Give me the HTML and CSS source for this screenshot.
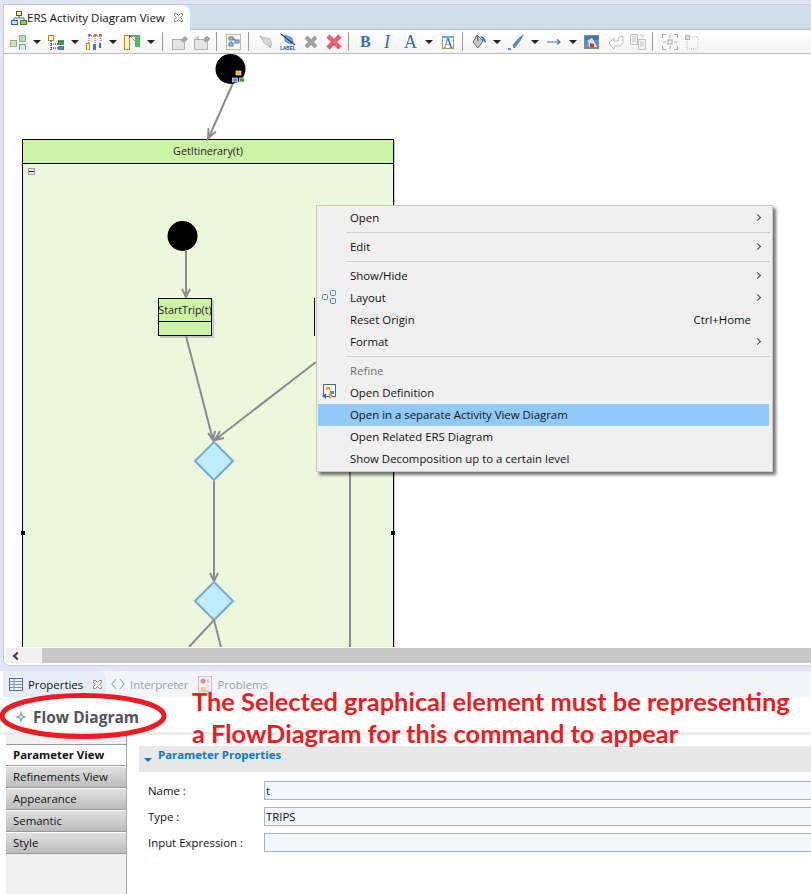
FILE: index.html
```html
<!DOCTYPE html>
<html lang="en">
<head>
    <meta charset="UTF-8">
    <title>ERS Activity Diagram View</title>
    <link rel="stylesheet" href="styles.css">
</head>
<body>
    <div class="editor">
        <div class="tabbar">
            <div class="tab">
                <svg class="tab-icon" viewBox="0 0 16 14" width="16" height="14">
                    <rect x="5.5" y="0.5" width="5" height="4" fill="#fde9a8" stroke="#6a5a20"/>
                    <path d="M8 5v2M3 9V7h10v2" fill="none" stroke="#4a6ea8"/>
                    <rect x="0.5" y="9.5" width="6" height="4" fill="#cfe2f8" stroke="#2f5f9f"/>
                    <rect x="9.5" y="9.5" width="6" height="4" fill="#8fcf5f" stroke="#3f7f2f"/>
                </svg>
                <span>ERS Activity Diagram View</span>
                <svg class="close" viewBox="0 0 11 11" width="11" height="11">
                    <path d="M1.5 1.5h2l2 2 2-2h2v2l-2 2 2 2v2h-2l-2-2-2 2h-2v-2l2-2-2-2z" fill="#fff" stroke="#8a8a8a"/>
                </svg>
            </div>
        </div>

        <div class="toolbar">
            <svg class="tool" viewBox="0 0 16 16"><rect x="0.5" y="6.5" width="6" height="6" fill="#cfe0a0" stroke="#9db08a"/><rect x="9.5" y="1.5" width="6" height="6" fill="#b5e0a5" stroke="#8ab09a"/><rect x="9.5" y="10.5" width="6" height="6" fill="#d5e5f8" stroke="#7a9cc8"/></svg>
            <span class="drop"></span>
            <svg class="tool" viewBox="0 0 16 16"><rect x="0.5" y="1.5" width="5" height="5" fill="#fff4cc" stroke="#b88a18"/><path d="M3 7v9M3 10h7M3 14h7" stroke="#111" stroke-dasharray="1 1" fill="none"/><rect x="10" y="6" width="6" height="5" fill="#3f9a50"/><rect x="10" y="12" width="6" height="5" fill="#4f80c0"/></svg>
            <span class="drop"></span>
            <svg class="tool" viewBox="0 0 16 16"><path d="M3 2v8M3 2h12M9 2v8M15 2v6" stroke="#d82020" stroke-dasharray="1 1" fill="none"/><path d="M2 1h3M8 1h3M13 1h3" stroke="#222"/><rect x="0.5" y="9.5" width="3" height="6.5" fill="#fff6d8" stroke="#c88a18"/><rect x="7" y="10" width="3" height="6" fill="#4a74b8"/><rect x="13" y="9" width="2" height="5" fill="#3f7f4f"/></svg>
            <span class="drop"></span>
            <svg class="tool" viewBox="0 0 16 16"><rect x="0.5" y="1.5" width="5" height="14" fill="#fff2c4" stroke="#c08a10"/><rect x="11" y="1" width="5" height="12" fill="#48c068"/><path d="M5 2h6" stroke="#222"/><path d="M6 2l5 5" stroke="#d82020" stroke-dasharray="1 1"/></svg>
            <span class="drop"></span>
            <span class="sep"></span>
            <svg class="tool" viewBox="0 0 16 16"><rect x="0.5" y="5.5" width="12" height="10" fill="#e4e4e4" stroke="#b0b0b0"/><path d="M8 6l5-4 3 3-4 4z" fill="#a8a8a8"/></svg>
            <svg class="tool" viewBox="0 0 16 16"><rect x="0.5" y="5.5" width="13" height="10" fill="#e4e4e4" stroke="#b0b0b0"/><path d="M9 6l4-4 3 3-4 3zM1 3l4 3M4 2v4" fill="#a8a8a8" stroke="#a8a8a8"/></svg>
            <span class="sep"></span>
            <svg class="tool" viewBox="0 0 16 16"><rect x="0.5" y="0.5" width="14" height="15" fill="#fdfaf0" stroke="#c8b888"/><rect x="3" y="3" width="4" height="3" fill="#a8c4e4" stroke="#4f78a8"/><rect x="9" y="6" width="4" height="3" fill="#a8c4e4" stroke="#4f78a8"/><rect x="3" y="9" width="4" height="3" fill="#a8c4e4" stroke="#4f78a8"/><path d="M7 5h2v2M5 7v2" stroke="#4f78a8" fill="none"/></svg>
            <span class="sep"></span>
            <svg class="tool" viewBox="0 0 16 16"><path d="M2 2l11 12" stroke="#b0b0b0" stroke-width="1.5"/><path d="M5 3l7 2 2 6-3 1-6-4z" fill="#d8d8d8" stroke="#c0c0c0"/></svg>
            <svg class="tool" viewBox="0 0 16 16"><path d="M5 1l7 3 1 5-3 1-5-3z" fill="#7fa8d0" stroke="#5f88b0"/><path d="M1 0l14 11" stroke="#123f8f" stroke-width="1.2"/><text class="tiny" x="0.2" y="16">LABEL</text></svg>
            <svg class="tool tool-wide" viewBox="0 0 18 16"><path d="M4 3l10 10M14 3L4 13" stroke="#a0a0a0" stroke-width="4"/></svg>
            <svg class="tool" viewBox="0 0 16 16"><path d="M2 2l12 12M14 2L2 14" stroke="#e8566a" stroke-width="4.5"/><path d="M2 2l12 12M14 2L2 14" stroke="#f6a8b0" stroke-dasharray="1 2"/></svg>
            <span class="sep"></span>
            <span class="tool letter letter-b">B</span>
            <span class="tool letter letter-i">I</span>
            <span class="tool letter">A</span>
            <span class="drop"></span>
            <svg class="tool" viewBox="0 0 16 16"><rect x="2.5" y="3.5" width="11" height="11" fill="#fff" stroke="#a89860"/><path d="M2 3h12" stroke="#6fa8e0" stroke-width="2"/><text class="mini-a" x="8" y="14">A</text></svg>
            <span class="sep"></span>
            <svg class="tool tool-narrow" viewBox="0 0 14 16"><path d="M5 1l6 6-5 7-5-6z" fill="#c8c8c8" stroke="#666"/><path d="M5 1l1 6" stroke="#555"/><path d="M8 2c3 0 6 3 6 7-2-1-3-3-4-4z" fill="#3f78b8"/></svg>
            <span class="drop"></span>
            <svg class="tool" viewBox="0 0 16 16"><path d="M15 1c-1 3-5 9-9 13l-1-3c3-4 7-8 10-10z" fill="#5f88c0" stroke="#3a5f98" stroke-width="0.6"/><path d="M0 15h3" stroke="#3a6ea8" stroke-width="1.5"/></svg>
            <span class="drop"></span>
            <svg class="tool" viewBox="0 0 16 16"><path d="M1 8h13M11 5.5L14 8l-3 2.5" fill="none" stroke="#4a74a8" stroke-width="1.2"/></svg>
            <span class="drop"></span>
            <svg class="tool" viewBox="0 0 16 16"><rect x="0.5" y="1.5" width="14" height="13" fill="#5a90c8" stroke="#8a8a70"/><rect x="1" y="2" width="13" height="4" fill="#3a78c0"/><path d="M4 6l4-2 3 5 2 4H5z" fill="#e8e4e0"/><path d="M6 9l4 1v3H6z" fill="#c83830"/></svg>
            <svg class="tool tool-undo" viewBox="0 0 16 16"><path d="M15 2v7l-3 3H7l-1 3-5-6 5-5v3h4l1-4z" fill="#f8f8f8" stroke="#c0c0c0"/></svg>
            <svg class="tool" viewBox="0 0 16 16"><path d="M0.5 0.5h7v10h-7zM8.5 5.5h7v10h-7z" fill="#f4f4f4" stroke="#c0c0c0"/><path d="M2 3h4M2 5h4M2 7h4M10 8h4M10 10h4M10 12h4M10 1h3v3" fill="none" stroke="#c4c4c4"/></svg>
            <span class="sep"></span>
            <svg class="tool" viewBox="0 0 16 16"><path d="M0.5 4V0.5H4M12 0.5h3.5V4M0.5 12v3.5H4M12 15.5h3.5V12" fill="none" stroke="#a8a8a8"/><rect x="6" y="6" width="4" height="4" fill="none" stroke="#a8a8a8"/><path d="M8 1v3M8 12v3M1 8h3M12 8h3" stroke="#a8a8a8"/></svg>
            <svg class="tool" viewBox="0 0 16 16"><rect x="1.5" y="1.5" width="4" height="4" fill="#d8d8d8" stroke="#b8b8b8"/><path d="M6 3h8v12H3V6" fill="none" stroke="#c0c0c0" stroke-dasharray="1 1"/></svg>
        </div>

        <div class="canvas">
            <svg class="diagram" viewBox="4 54 807 593" width="807" height="593">
                <rect class="region" x="22.5" y="139.5" width="371" height="520"/>
                <rect class="region-edge" x="394" y="140" width="1" height="520"/>
                <rect class="region-head" x="22.5" y="139.5" width="371" height="24"/>
                <text class="node-label" x="208" y="155">GetItinerary(t)</text>
                <rect x="28.5" y="168.5" width="6" height="6" fill="#eee" stroke="#999"/>
                <path d="M29 171.5h5" stroke="#222"/>

                <path class="flow" d="M233 83L209 137M215.8 131.5L208 138.5l0.5-10.2"/>
                <circle cx="230.5" cy="69" r="15"/>
                <rect x="236" y="71" width="5" height="4" fill="#f0b020" stroke="#fff" stroke-width="0.6"/>
                <rect x="232.5" y="78" width="5" height="4" fill="#5a90d0" stroke="#fff" stroke-width="0.6"/>
                <rect x="239.5" y="78" width="5" height="4" fill="#3fa040" stroke="#fff" stroke-width="0.6"/>

                <circle cx="182.5" cy="236" r="15"/>
                <path class="flow" d="M186 251V297M182 289l4 8 4-8"/>
                <rect x="160" y="300" width="54" height="38" fill="#c8c8c8"/>
                <rect class="node" x="158.5" y="298.5" width="53" height="37"/>
                <path d="M158 321.5h54" stroke="#000"/>
                <text class="node-label" x="185" y="314">StartTrip(t)</text>
                <path d="M314.5 298v38" stroke="#000"/>

                <path class="flow" d="M186 336l27 104M208 433l5 7 2-9"/>
                <path class="flow" d="M316 362L215 440M220 431l-5 9 9-2"/>
                <path class="gate" d="M214 442l19 19-19 19-19-19z"/>
                <path class="flow" d="M214 481V581M210 573l4 8 4-8"/>
                <path class="gate" d="M214 582l19 19-19 19-19-19z"/>
                <path class="flow" d="M214 620L189 647M214 620l7 27"/>
                <path class="flow" d="M350 332V647"/>

                <rect x="21" y="531" width="4" height="4"/>
                <rect x="391" y="531" width="4" height="4"/>
            </svg>

            <div class="menu">
                <div class="menu-row"><span class="menu-icon"></span><span class="menu-text">Open</span><span class="chevron"></span></div>
                <div class="menu-sep"></div>
                <div class="menu-row"><span class="menu-icon"></span><span class="menu-text">Edit</span><span class="chevron"></span></div>
                <div class="menu-sep"></div>
                <div class="menu-row"><span class="menu-icon"></span><span class="menu-text">Show/Hide</span><span class="chevron"></span></div>
                <div class="menu-row">
                    <span class="menu-icon">
                        <svg viewBox="0 0 14 14" width="14" height="14"><rect x="0.5" y="4.5" width="5" height="5" rx="1" fill="#f4f8fc" stroke="#5f88c0"/><rect x="8.5" y="0.5" width="5" height="5" rx="1" fill="#f4f8fc" stroke="#5f88c0"/><rect x="8.5" y="8.5" width="5" height="5" rx="1" fill="#f4f8fc" stroke="#5f88c0"/></svg>
                    </span>
                    <span class="menu-text">Layout</span><span class="chevron"></span>
                </div>
                <div class="menu-row"><span class="menu-icon"></span><span class="menu-text">Reset Origin</span><span class="menu-key">Ctrl+Home</span><span class="chevron-space"></span></div>
                <div class="menu-row"><span class="menu-icon"></span><span class="menu-text">Format</span><span class="chevron"></span></div>
                <div class="menu-sep"></div>
                <div class="menu-row is-disabled"><span class="menu-icon"></span><span class="menu-text">Refine</span></div>
                <div class="menu-row">
                    <span class="menu-icon">
                        <svg viewBox="0 0 15 16" width="15" height="16"><rect x="1.5" y="0.5" width="12" height="12" fill="#fbfbf4" stroke="#5a6a7a"/><rect x="4" y="3" width="4" height="3" fill="#f0a830"/><path d="M8 7h4v3H8z" fill="#5f90c8"/><path d="M0 12l4-3v6z" fill="#2878d0"/><path d="M11 12l-4-3v6z" fill="#f09020"/></svg>
                    </span>
                    <span class="menu-text">Open Definition</span>
                </div>
                <div class="menu-row is-active"><span class="menu-icon"></span><span class="menu-text">Open in a separate Activity View Diagram</span></div>
                <div class="menu-row"><span class="menu-icon"></span><span class="menu-text">Open Related ERS Diagram</span></div>
                <div class="menu-row"><span class="menu-icon"></span><span class="menu-text">Show Decomposition up to a certain level</span></div>
            </div>
        </div>

        <div class="scrollbar">
            <div class="scroll-btn"><span class="scroll-arrow"></span></div>
            <div class="scroll-track"></div>
        </div>
    </div>

    <div class="panel">
        <div class="panel-tabs">
            <div class="panel-tab is-open">
                <svg viewBox="0 0 14 13" width="14" height="13"><rect x="0.5" y="0.5" width="13" height="12" fill="#eef3f9" stroke="#56708e"/><path d="M1 3.5h12M1 6.5h12M1 9.5h12M5 1v11" stroke="#7f96b0"/></svg>
                <span>Properties</span>
                <svg class="close" viewBox="0 0 11 11" width="11" height="11">
                    <path d="M1.5 1.5h2l2 2 2-2h2v2l-2 2 2 2v2h-2l-2-2-2 2h-2v-2l2-2-2-2z" fill="#fff" stroke="#8a8a8a"/>
                </svg>
            </div>
            <div class="panel-tab">
                <svg viewBox="0 0 14 12" width="14" height="12"><path d="M5 1L1 6l4 5M9 1l4 5-4 5" fill="none" stroke="#8fb0d0" stroke-width="1.2"/></svg>
                <span>Interpreter</span>
            </div>
            <div class="panel-tab">
                <svg viewBox="0 0 14 16" width="14" height="16"><rect x="0.5" y="0.5" width="13" height="15" fill="#f2f2f6" stroke="#c4c4d0"/><circle cx="5" cy="5" r="2.5" fill="#e88080"/><rect x="3" y="11" width="5" height="4" fill="#f0d080"/><path d="M10 3v4M10 9v2" stroke="#b0b8d0"/></svg>
                <span>Problems</span>
            </div>
        </div>

        <div class="panel-title">
            <svg viewBox="0 0 12 12" width="12" height="12"><path d="M6 0l1.6 4.4L12 6 7.6 7.6 6 12 4.4 7.6 0 6l4.4-1.6z" fill="#7fa8a8"/><circle cx="6" cy="6" r="1.6" fill="#d8eef0"/></svg>
            <span>Flow Diagram</span>
        </div>

        <div class="panel-body">
            <div class="side">
                <div class="side-tab is-active">Parameter View</div>
                <div class="side-tab">Refinements View</div>
                <div class="side-tab">Appearance</div>
                <div class="side-tab">Semantic</div>
                <div class="side-tab">Style</div>
            </div>
            <div class="content">
                <div class="section-head"><span class="twisty"></span>Parameter Properties</div>
                <div class="fields">
                    <label class="field-label">Name :</label>
                    <input class="field-input" type="text" value="t" readonly>
                    <label class="field-label">Type :</label>
                    <input class="field-input" type="text" value="TRIPS" readonly>
                    <label class="field-label">Input Expression :</label>
                    <input class="field-input" type="text" readonly>
                </div>
            </div>
        </div>

        <svg class="ring" viewBox="0 0 170 48" width="170" height="48"><ellipse cx="84" cy="24" rx="81" ry="20.5"/></svg>
        <p class="note"><span>The Selected graphical element must be representing</span><span>a FlowDiagram for this command to appear</span></p>
    </div>
</body>
</html>
```

FILE: styles.css
```css
body {
    margin: 0;
    height: 894px;
    overflow: hidden;
    padding-top: 4px;
    box-sizing: border-box;
    background-color: #e0e4f4;
    font-family: "Open Sans", sans-serif;
    font-size: 11.4px;
    color: #111;
}

/* editor */

.editor {
    margin-left: 3px;
    padding-bottom: 2px;
    background-color: #fff;
    border-left: 1px solid #c8ccd6;
    border-bottom: 1px solid #c8ccd6;
    border-bottom-left-radius: 6px;
}

.tabbar {
    display: flex;
    height: 24px;
    background-color: #d0dfee;
    border-top: 1px solid #c8c8d2;
    border-bottom: 1px solid #b4c0cc;
}

.tab {
    display: flex;
    align-items: center;
    width: 186px;
    height: 25px;
    box-sizing: border-box;
    padding-left: 7px;
    background-color: #fff;
    border-top-right-radius: 8px;
    font-size: 11.5px;
}

.close {
    flex: none;
    margin-left: 8px;
}

.toolbar {
    display: flex;
    align-items: center;
    gap: 6px;
    height: 23px;
    padding-left: 6px;
    background: linear-gradient(#fff, #f4f4f4);
    border-bottom: 1px solid #bcbcbc;
}

.tool {
    flex: none;
    width: 16px;
    height: 16px;
}

.tool-wide {
    width: 18px;
}

.tool-narrow {
    width: 14px;
}

.tool-undo {
    margin-left: 2px;
}

.drop {
    flex: none;
    margin: 0 1px;
    width: 0;
    height: 0;
    border-left: 4px solid transparent;
    border-right: 4px solid transparent;
    border-top: 4px solid #222;
}

.sep {
    flex: none;
    width: 1px;
    height: 19px;
    margin-right: 3px;
    background-color: #9a9a9a;
}

.letter {
    box-sizing: border-box;
    padding-left: 2px;
    font-family: "Liberation Serif", serif;
    font-size: 18px;
    line-height: 16px;
    color: #3a6ea5;
}

.letter-b {
    font-size: 16px;
    font-weight: bold;
}

.letter-i {
    padding-left: 4px;
    font-style: italic;
}

.tiny {
    font-family: "Liberation Sans", sans-serif;
    font-size: 4.6px;
    font-weight: bold;
    fill: #123f8f;
}

.mini-a {
    font-family: "Liberation Serif", serif;
    font-size: 14px;
    text-anchor: middle;
    fill: #3a6ea5;
}

/* canvas */

.canvas {
    position: relative;
    height: 593px;
    overflow: hidden;
}

.diagram {
    display: block;
}

.region {
    fill: #ebf8dc;
    stroke: #000;
}

.region-edge {
    fill: #c8c8c8;
}

.region-head,
.node {
    fill: #cdf3a6;
    stroke: #000;
}

.node-label {
    font-size: 10.7px;
    text-anchor: middle;
    fill: #222;
}

.flow {
    fill: none;
    stroke: #8c8c8c;
    stroke-width: 2;
}

.gate {
    fill: #bfecff;
    stroke: #78a8d8;
    stroke-width: 2;
}

/* context menu */

.menu {
    position: absolute;
    left: 312px;
    top: 151px;
    width: 453px;
    padding: 1px;
    background-color: #f0f0f0;
    border: 1px solid #c8c8c8;
    box-shadow: 3px 3px 3px rgba(0, 0, 0, 0.55);
}

.menu-row {
    display: flex;
    align-items: center;
    height: 22px;
    width: 451px;
    box-sizing: border-box;
    padding-bottom: 2px;
}

.menu-icon {
    display: flex;
    justify-content: center;
    flex: none;
    width: 32px;
    padding-right: 10px;
    box-sizing: border-box;
}

.menu-text {
    flex: 1;
}

.menu-key {
    margin-right: 4px;
}

.chevron,
.chevron-space {
    flex: none;
    width: 14px;
}

.chevron::before {
    content: "";
    display: block;
    width: 4px;
    height: 4px;
    border-top: 1px solid #444;
    border-right: 1px solid #444;
    transform: rotate(45deg);
}

.menu-sep {
    height: 1px;
    margin: 3px 1px 3px 28px;
    background-color: #d0d0d0;
}

.is-disabled {
    color: #707070;
}

.is-active {
    background-color: #91c9f7;
}

.scrollbar {
    display: flex;
    height: 15px;
    margin-top: 1px;
    margin-left: 2px;
}

.scroll-btn {
    display: flex;
    align-items: center;
    justify-content: center;
    width: 36px;
    background-color: #f0f0f0;
    padding-right: 14px;
    box-sizing: border-box;
}

.scroll-arrow {
    width: 4px;
    height: 4px;
    border-left: 2px solid #444;
    border-bottom: 2px solid #444;
    transform: rotate(45deg);
}

.scroll-track {
    flex: 1;
    background-color: #c8c8c8;
}

/* properties panel */

.panel {
    position: relative;
    height: 223px;
    margin-top: 5px;
    background-color: #fff;
}

.panel-tabs {
    display: flex;
    height: 26px;
    margin-left: 3px;
    background-color: #f3f5fb;
}

.panel-tab {
    display: flex;
    align-items: center;
    gap: 5px;
    padding-left: 5px;
    padding-right: 5px;
    color: #a0a0a0;
}

.panel-tab svg {
    flex: none;
}

.panel-tab .close {
    margin-left: 4px;
}

.panel-tab.is-open {
    width: 103px;
    box-sizing: border-box;
    padding-left: 6px;
    background-color: #e6edf6;
    border-top-right-radius: 8px;
    color: #111;
}

.panel-title {
    display: flex;
    align-items: center;
    gap: 6px;
    height: 38px;
    box-sizing: border-box;
    padding: 4px 0 0 15px;
    border-bottom: 3px solid #ececec;
    font-size: 15.5px;
    font-weight: bold;
    color: #50545a;
}

.panel-body {
    display: flex;
}

.side {
    flex: none;
    width: 121px;
    height: 159px;
    margin-left: 6px;
    box-sizing: border-box;
    padding-top: 9px;
    background-color: #f0f0f0;
    border-right: 1px solid #a8a8a8;
}

.side-tab {
    height: 22px;
    box-sizing: border-box;
    padding-left: 7px;
    line-height: 20px;
    background: linear-gradient(#e0e0e0, #bcbcbc);
    border-top: 1px solid #fff;
    border-bottom: 1px solid #999;
}

.side-tab.is-active {
    font-weight: bold;
    background: #fff;
    border-top-color: #999;
}

.content {
    flex: 1;
    margin: 11px 0 0 12px;
}

.section-head {
    display: flex;
    align-items: flex-start;
    height: 26px;
    box-sizing: border-box;
    padding: 1px 0 0 5px;
    background-color: #e8e8e8;
    font-weight: bold;
    color: #0a78d0;
}

.twisty {
    width: 0;
    height: 0;
    margin: 11px 6px 0 0;
    border-left: 4px solid transparent;
    border-right: 4px solid transparent;
    border-top: 4px solid #1a70c0;
}

.fields {
    display: grid;
    grid-template-columns: 116px 1fr;
    row-gap: 7px;
    align-items: center;
    margin-top: 9px;
    margin-left: 9px;
    margin-right: -10px;
}

.field-input {
    height: 19px;
    box-sizing: border-box;
    padding: 0 1px;
    background-color: #f3f7fd;
    border: 1px solid #aab0bc;
    font-family: "Open Sans", sans-serif;
    font-size: 11.4px;
    color: #111;
}

.ring {
    position: absolute;
    left: -1px;
    top: 21px;
}

.ring ellipse {
    fill: none;
    stroke: #ed1c24;
    stroke-width: 5;
}

.note {
    display: flex;
    flex-direction: column;
    gap: 12px;
    position: absolute;
    left: 192px;
    top: 20px;
    margin: 0;
    font-family: Lato, sans-serif;
    font-size: 25.4px;
    line-height: 20px;
    font-weight: bold;
    color: #ed1c24;
    white-space: nowrap;
}
```
